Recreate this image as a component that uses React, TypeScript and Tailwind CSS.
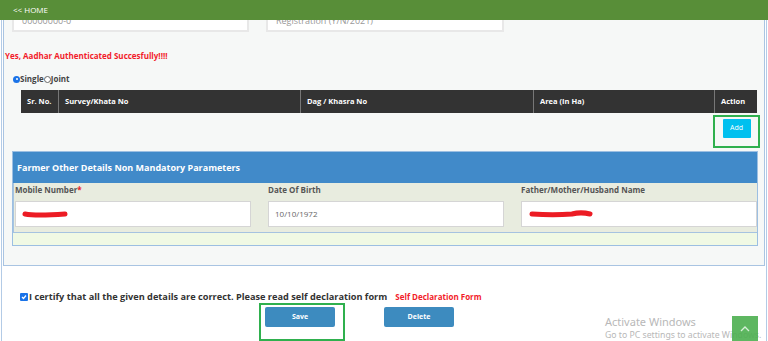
import React from "react";

function Scribble({ width, d }: { width: number; d: string }) {
  return (
    <svg width={width} height="10" viewBox={`0 0 ${width} 10`} className="block">
      <path d={d} stroke="#ec1c24" strokeWidth="5" strokeLinecap="round" fill="none" />
    </svg>
  );
}

export default function App() {
  const cols = [
    { title: "Sr. No.", w: "w-[37px]" },
    { title: "Survey/Khata No", w: "w-[242px]" },
    { title: "Dag / Khasra No", w: "w-[233px]" },
    { title: "Area (In Ha)", w: "w-[181px]" },
    { title: "Action", w: "w-[43px]" },
  ];

  return (
    <div className="relative w-[768px] h-[341px] overflow-hidden bg-white font-['Open_Sans',sans-serif]">
      {/* top bar */}
      <div className="h-[20px] bg-[#588e38] flex items-center pl-[13px] text-[8px] text-white">
        &lt;&lt; HOME
      </div>

      <div className="ml-[1px] mr-[1px] border-l border-r border-[#b3cbe6] h-[321px]">
        {/* main box */}
        <div className="ml-[1px] mr-[1px] h-[246px] bg-[#f6f8f7] border-l border-r border-b border-[#a9c4e2]">
          {/* cut-off inputs row */}
          <div className="flex pl-[8px] gap-[17px]">
            <div className="w-[237px] h-[12px] bg-white border-x-2 border-b-2 border-[#e8e8e8] overflow-hidden">
              <div className="mt-[-5px] pl-[8px] text-[9px] leading-[12px] text-[#999]">00000000-0</div>
            </div>
            <div className="w-[238px] h-[12px] bg-white border-x-2 border-b-2 border-[#e8e8e8] overflow-hidden">
              <div className="mt-[-5px] pl-[8px] text-[9px] leading-[12px] text-[#999]">Registration (Y/N/2021)</div>
            </div>
          </div>

          <div className="mt-[18px] pl-[1px] text-[8px] font-bold text-[#f21c2a] leading-[12px]">
            Yes, Aadhar Authenticated Succesfully!!!!
          </div>

          {/* radio */}
          <div className="mt-[12px] pl-[9px] flex items-center text-[8px] font-bold text-[#444] leading-[10px]">
            <span className="w-[7px] h-[7px] rounded-full bg-[#1a73e8] flex items-center justify-center">
              <span className="w-[2px] h-[2px] rounded-full bg-white" />
            </span>
            <span>Single</span>
            <span className="w-[7px] h-[7px] rounded-full bg-white border border-[#666]" />
            <span>Joint</span>
          </div>

          {/* table header */}
          <div className="mt-[6px] ml-[17px] flex h-[23px] bg-[#333333] w-[736px]">
            {cols.map((c, i) => (
              <div
                key={c.title}
                className={`${c.w} h-full flex items-center pl-[6px] text-[7.5px] font-bold text-white ${i > 0 ? "border-l border-[#777]" : ""}`}
              >
                {c.title}
              </div>
            ))}
          </div>

          {/* add button */}
          <div className="flex justify-end pr-[4px] mt-[2px]">
            <div className="w-[47px] h-[33px] border-2 border-[#2fb04e] flex items-start justify-center pt-[2px]">
              <button className="block w-[28px] h-[19px] bg-[#00c0ef] text-white text-[7px] rounded-[1px]">Add</button>
            </div>
          </div>

          {/* panel */}
          <div className="mt-[3px] ml-[8px] w-[746px] border border-[#9cbfe2] bg-[#f0f9e4]">
            <div className="h-[31px] bg-[#418ac9] flex items-center pl-[4px] text-[9px] font-bold text-white">
              Farmer Other Details Non Mandatory Parameters
            </div>
            <div className="bg-[#e8ecdf] border-b border-l border-[#a6c3e0] pl-[1px] pb-[5px] grid grid-cols-3 gap-x-[17px]">
              <div>
                <div className="h-[18px] pt-[1px] leading-[12px] text-[8px] font-bold text-[#555]">
                  Mobile Number<span className="text-[#e8202a]">*</span>
                </div>
                <div className="h-[26px] bg-white border border-[#d5d5d5] flex items-center pl-[5px]">
                  <Scribble width={48} d="M4 5 C 14 7, 30 6, 44 5" />
                </div>
              </div>
              <div>
                <div className="h-[18px] pt-[1px] leading-[12px] text-[8px] font-bold text-[#555]">Date Of Birth</div>
                <div className="h-[26px] bg-white border border-[#d5d5d5] flex items-center pl-[6px] text-[8px] text-[#666]">
                  10/10/1972
                </div>
              </div>
              <div>
                <div className="h-[18px] pt-[1px] leading-[12px] text-[8px] font-bold text-[#555]">Father/Mother/Husband Name</div>
                <div className="h-[26px] bg-white border border-[#d5d5d5] flex items-center pl-[6px]">
                  <Scribble width={66} d="M4 5 C 20 6, 30 6, 44 5 C 52 3, 58 4, 62 5" />
                </div>
              </div>
            </div>
            <div className="h-[12px]" />
          </div>
        </div>

        {/* certify */}
        <div className="mt-[26px] pl-[18px] flex items-center leading-[10px]">
          <span className="w-[8px] h-[8px] bg-[#1a73e8] rounded-[1px] flex items-center justify-center">
            <svg width="6" height="6" viewBox="0 0 6 6">
              <path d="M1 3 L2.5 4.5 L5 1.5" stroke="white" strokeWidth="1.2" fill="none" />
            </svg>
          </span>
          <span className="text-[9.2px] font-bold text-[#333] ml-[1px]">
            I certify that all the given details are correct. Please read self declaration form
          </span>
          <span className="ml-[8px] text-[8px] font-bold text-[#f21c2a]">Self Declaration Form</span>
        </div>

        {/* buttons */}
        <div className="flex mt-[1px] pl-[257px] items-start">
          <div className="w-[86px] h-[38px] border-2 border-[#2fb04e] pt-[2px] pl-[4px]">
            <button className="block w-[70px] h-[20px] bg-[#3d8bbf] text-white text-[7px] font-bold rounded-[2px]">Save</button>
          </div>
          <button className="block ml-[39px] mt-[4px] w-[70px] h-[20px] bg-[#3d8bbf] text-white text-[7px] font-bold rounded-[2px]">
            Delete
          </button>
        </div>
      </div>

      {/* windows watermark */}
      <div className="absolute left-[605px] top-[314px] text-[#b8b8b8] font-['Noto_Sans',sans-serif] pointer-events-none">
        <div className="text-[11px] leading-[15px]">Activate Windows</div>
        <div className="text-[8.7px] leading-[12px]">Go to PC settings to activate Windows.</div>
      </div>

      {/* scroll to top */}
      <div className="absolute left-[732px] top-[316px] w-[26px] h-[25px] bg-[#4caf50]/90 flex items-center justify-center">
        <svg width="10" height="6" viewBox="0 0 10 6">
          <path d="M1 5 L5 1 L9 5" stroke="#d7f0d8" strokeWidth="1.3" fill="none" />
        </svg>
      </div>
    </div>
  );
}
